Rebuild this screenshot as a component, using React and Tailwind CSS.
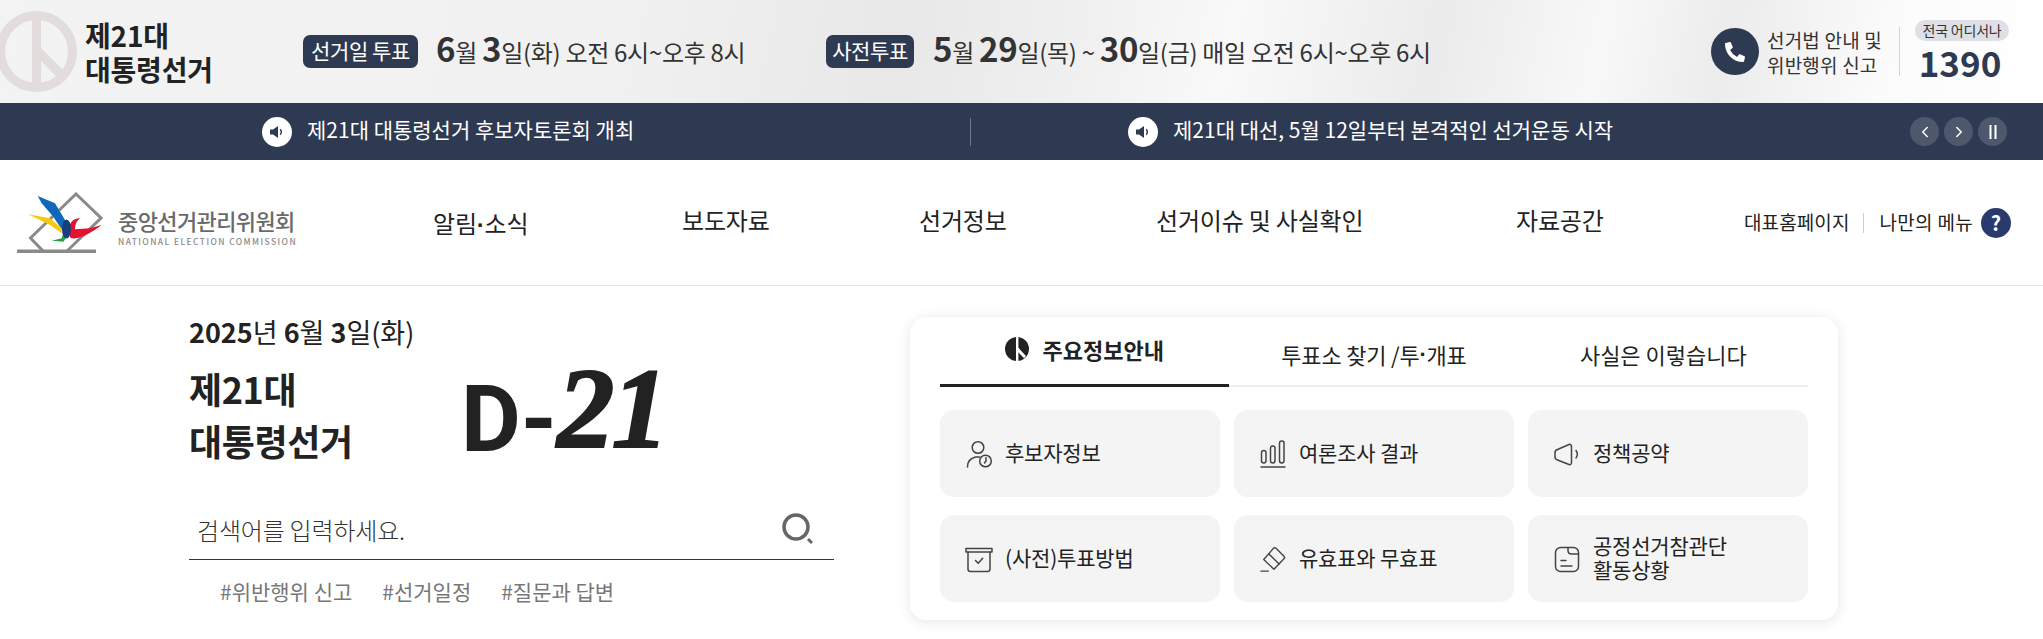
import React from "react";
import { ChevronLeft, ChevronRight } from "lucide-react";
import { FaPhoneAlt } from "react-icons/fa";

const Speaker = () => (
  <span className="flex h-[30px] w-[30px] shrink-0 items-center justify-center rounded-full bg-white">
    <svg viewBox="0 0 20 20" className="h-[20px] w-[20px]">
      <path d="M3 7.500h3L11 4v12l-5-3.500H3z" fill="#2e3a52" />
      <path d="M13.200 7.200c1.300 1.600 1.300 4 0 5.600" stroke="#2e3a52" strokeWidth="1.400" fill="none" />
    </svg>
  </span>
);

const Ctrl = ({ children }) => (
  <button className="flex h-[29px] w-[29px] items-center justify-center rounded-full bg-[#4e586c] text-white">{children}</button>
);

const Mark = ({ className, color }) => (
  <svg viewBox="0 0 80 80" className={className}>
    <circle cx="40" cy="40" r="35.500" fill="none" stroke={color} strokeWidth="9" />
    <path d="M35.500 4h9v72h-9z" fill={color} />
    <path d="M42 34 L70 62 L64 69 L42 47z" fill={color} />
  </svg>
);

const TabMark = () => (
  <svg viewBox="0 0 24 24" className="h-[24px] w-[24px]">
    <circle cx="12" cy="12" r="12" fill="#222" />
    <path d="M11 0h2.400v24H11z" fill="#fff" />
    <path d="M13 10.500 L21 19 L19 21.200 L13 15z" fill="#fff" />
  </svg>
);

const stroke = { fill: "none", stroke: "#444", strokeWidth: 1.5, strokeLinecap: "round", strokeLinejoin: "round" };

const icons = {
  person: (
    <svg viewBox="0 0 28 28" className="h-[28px] w-[28px]" {...stroke}>
      <circle cx="13" cy="7.500" r="5.800" />
      <path d="M2.500 27c0-5.500 3.500-9 8-10h4" />
      <circle cx="20.500" cy="21" r="5.800" />
      <path d="M21 17.500v3.500l-1.500 2" />
    </svg>
  ),
  bars: (
    <svg viewBox="0 0 26 28" className="h-[28px] w-[26px]" {...stroke}>
      <rect x="1.500" y="10.500" width="4.500" height="12.500" rx="2.200" />
      <rect x="10.500" y="6" width="4.500" height="17" rx="2.200" />
      <rect x="19.500" y="1" width="4.500" height="22" rx="2.200" />
      <path d="M1 27h24" />
    </svg>
  ),
  horn: (
    <svg viewBox="0 0 26 28" className="h-[28px] w-[26px]" {...stroke}>
      <path d="M3.500 9.500 15 4.500c1.500-.5 2.500.5 2.500 2v16c0 1.500-1 2.500-2.500 2L3.500 20c-1.500-.5-2.500-1.500-2.500-3v-4.500c0-1.500 1-2.500 2.500-3z" />
      <path d="M22 10.500c1.600 2.200 1.600 5.300 0 7.500" />
    </svg>
  ),
  box: (
    <svg viewBox="0 0 28 28" className="h-[28px] w-[28px]" {...stroke}>
      <path d="M1 3.500h26v3.500H1z" />
      <path d="M3 7v17c0 1.500 1 2.500 2.500 2.500h17c1.500 0 2.500-1 2.500-2.500V7" />
      <path d="M10.500 15.500l2.700 2.700 4.500-5" />
    </svg>
  ),
  eraser: (
    <svg viewBox="0 0 28 28" className="h-[28px] w-[26px]" {...stroke}>
      <path d="M4 14.500 14.500 2.500c.8-.9 2-.9 2.800 0l8.500 8.500c.8.8.8 2 0 2.800L15 25z" />
      <path d="M9.500 8.500l11 11" />
      <path d="M1 27h8" />
    </svg>
  ),
  note: (
    <svg viewBox="0 0 26 28" className="h-[28px] w-[26px]" {...stroke}>
      <rect x="1.500" y="2.500" width="23" height="24" rx="5" />
      <path d="M14 2.500v3c0 2 1.500 3.500 3.500 3.500h7" />
      <path d="M7 15.500h5M7 21h11" />
    </svg>
  ),
};

const Dot = () => <span className="font-['Liberation_Sans',sans-serif] font-bold">·</span>;

const Tile = ({ icon, children }) => (
  <a className="flex h-[87px] items-center rounded-[14px] bg-[#f4f4f4] pl-[25px]">
    <span className="flex w-[28px] shrink-0 justify-center">{icons[icon]}</span>
    <span className="ml-[12px] pb-[3px] text-[21px] leading-[24px] tracking-[-0.2px] text-[#222]">{children}</span>
  </a>
);

export default function App() {
  return (
    <div className="h-[639px] w-[2043px] overflow-hidden bg-white font-['Noto_Sans_CJK_KR','Noto_Sans',sans-serif] text-[#222]">
      {/* election strip */}
      <div className="flex h-[103px] items-center bg-[linear-gradient(102deg,#f3f3f3_0%,#f1f1f1_30%,#e8e8e8_44%,#efefef_52%,#f9f9f9_60%,#ebebeb_70%,#f8f8f8_78%,#ececec_84%,#fbfbfb_92%,#ffffff_100%)]">
        <Mark className="-ml-[4px] h-[81px] w-[81px] shrink-0" color="#e3dcdc" />
        <div className="ml-[8px] w-[218px] text-[28px] font-bold leading-[34px] tracking-[-0.2px] text-[#222]">
          제21대<br />대통령선거
        </div>
        <span className="flex h-[33px] w-[115px] items-center justify-center rounded-[7px] bg-[#2e3a52] pb-[2px] text-[21px] tracking-[-0.4px] text-white">선거일 투표</span>
        <div className="ml-[18px] w-[390px] pb-[6px] text-[24px] leading-none tracking-[-0.3px] text-[#333]">
          <b className="text-[33px] font-bold">6</b>월 <b className="text-[33px] font-bold">3</b>일(화) 오전 6시~오후 8시
        </div>
        <span className="flex h-[33px] w-[88px] items-center justify-center rounded-[7px] bg-[#2e3a52] pb-[2px] text-[21px] tracking-[-0.4px] text-white">사전투표</span>
        <div className="ml-[19px] w-[778px] pb-[6px] text-[24px] leading-none tracking-[-0.3px] text-[#333]">
          <b className="text-[33px] font-bold">5</b>월 <b className="text-[33px] font-bold">29</b>일(목) ~ <b className="text-[33px] font-bold">30</b>일(금) 매일 오전 6시~오후 6시
        </div>
        <span className="flex h-[47px] w-[48px] shrink-0 items-center justify-center rounded-full bg-[#2e3a52] text-white">
          <FaPhoneAlt className="h-[20px] w-[20px]" />
        </span>
        <div className="ml-[8px] w-[132px] text-[19px] leading-[25px] tracking-[0.2px] text-[#333]">
          선거법 안내 및<br />위반행위 신고
        </div>
        <div className="flex h-[49px] w-[16px] border-l border-[#d5d5d5]" />
        <div className="flex w-[94px] flex-col items-center">
          <span className="flex h-[21px] w-[94px] items-center justify-center rounded-full bg-[#dfe0e5] text-[14px] tracking-[-0.2px] text-[#333]">전국 어디서나</span>
          <span className="-ml-[4px] text-[35px] font-bold leading-[42px] text-[#2e3a52]">1390</span>
        </div>
      </div>

      {/* notices */}
      <div className="flex h-[57px] items-center bg-[#2e3a52] pl-[262px] text-[21px] text-white">
        <Speaker />
        <span className="ml-[15px] w-[663px] pb-[4px]">제21대 대통령선거 후보자토론회 개최</span>
        <span className="h-[28px] border-l border-[#6d7688]" />
        <span className="w-[157px]" />
        <Speaker />
        <span className="ml-[15px] w-[737px] pb-[4px]">제21대 대선, 5월 12일부터 본격적인 선거운동 시작</span>
        <div className="flex items-center gap-[5px]">
          <Ctrl><ChevronLeft size={18} /></Ctrl>
          <Ctrl><ChevronRight size={18} /></Ctrl>
          <Ctrl>
            <svg viewBox="0 0 14 14" className="h-[14px] w-[14px]">
              <path d="M3.500 0h2v14h-2zM8.500 0h2v14h-2z" fill="#fff" />
            </svg>
          </Ctrl>
        </div>
      </div>

      {/* nav */}
      <div className="flex h-[126px] items-center border-b border-[#e2e2e2] pl-[17px]">
        <svg viewBox="0 0 86 62" className="h-[62px] w-[86px] shrink-0">
          <path d="M26 59 13.500 46 59 2 84 26 50 59" fill="none" stroke="#8a8a8a" strokeWidth="3" />
          <rect x="0" y="57.500" width="79" height="3.500" fill="#8a8a8a" />
          <path d="M20.700 4 38 11.300 48 28 51.300 39.700H46.300L36.300 24.700 24.700 11.300z" fill="#1268b8" />
          <path d="M11.300 22.300 33 26.300 44.700 36.300V41.300L33 33z" fill="#f5c90f" />
          <path d="M34.700 48.700 44.700 46.300 48 34.700 52 42 46.300 49.700z" fill="#2f9e44" />
          <path d="M84.700 33 73 36.300 58 37.300C58 32 60 28.500 63 26.300 57 26 53 30 52 36 51.500 42 53 46 54.700 46.300 62 47 71.300 43 84.700 33z" fill="#e5122d" />
          <ellipse cx="49.500" cy="37" rx="4.500" ry="9.500" fill="#163f7d" />
        </svg>
        <div className="ml-[15px] w-[177px] shrink-0 pt-[10px]">
          <div className="text-[22px] font-medium leading-[24px] tracking-[-0.6px] whitespace-nowrap text-[#6a6a6a]">중앙선거관리위원회</div>
          <div className="mt-[4px] text-[8.500px] font-medium leading-[11px] tracking-[1.4px] whitespace-nowrap text-[#8a8a8a]">NATIONAL ELECTION COMMISSION</div>
        </div>
        <nav className="flex -translate-y-[3px] items-center text-[24px] tracking-[-0.2px] text-[#222]">
          <a className="ml-[138px] mt-[9px] w-[249px]">알림<Dot />소식</a>
          <a className="w-[237px]">보도자료</a>
          <a className="w-[237px]">선거정보</a>
          <a className="w-[360px]">선거이슈 및 사실확인</a>
          <a className="w-[228px]">자료공간</a>
        </nav>
        <a className="text-[19px] tracking-[0.1px]">대표홈페이지</a>
        <span className="ml-[14px] h-[20px] border-l border-[#cfcfcf]" />
        <a className="ml-[15px] text-[19px] tracking-[0.3px]">나만의 메뉴</a>
        <span className="ml-[8px] flex h-[30px] w-[30px] items-center justify-center rounded-full bg-[#2b3a6e] text-[20px] font-bold text-white">?</span>
      </div>

      {/* main */}
      <div className="flex pl-[189px] pt-[31px]">
        <div className="w-[645px]">
          <div className="text-[27px] leading-[30px] text-[#222]">
            <b className="font-bold">2025</b>년 <b className="font-bold">6</b>월 <b className="font-bold">3</b>일(화)
          </div>
          <div className="mt-[15px] flex">
            <div className="w-[272px] text-[36px] font-bold leading-[52px] tracking-[-0.4px]">제21대<br />대통령선거</div>
            <div className="flex h-[104px] items-end leading-none text-[#222]">
              <span className="font-['Roboto',sans-serif] text-[92px] font-bold">D-</span>
              <span className="font-['Liberation_Serif',serif] text-[115px] font-bold italic tracking-[-3px] [-webkit-text-stroke:2px_#222]">21</span>
            </div>
          </div>
          <div className="mt-[33px] flex h-[61px] items-center justify-between border-b border-[#333] pl-[8px] pr-[20px]">
            <span className="pt-[1px] text-[24px] font-light tracking-[-0.2px] text-[#333]">검색어를 입력하세요.</span>
            <svg viewBox="0 0 32 32" className="h-[32px] w-[32px]">
              <circle cx="14" cy="14" r="12" fill="none" stroke="#666" strokeWidth="3.500" />
              <path d="M26 26l4 4" stroke="#666" strokeWidth="3" />
            </svg>
          </div>
          <div className="mt-[17px] flex gap-[30px] pl-[31px] text-[21px] leading-[28px] text-[#777]">
            <span>#위반행위 신고</span>
            <span>#선거일정</span>
            <span>#질문과 답변</span>
          </div>
        </div>

        <div className="ml-[76px] h-[303px] w-[928px] rounded-[16px] bg-white px-[30px] shadow-[0_2px_14px_rgba(0,0,0,0.1)]">
          <div className="grid h-[70px] grid-cols-3 border-b-2 border-[#eeeeee] text-[22px]">
            <div className="-mb-[2px] flex items-center justify-center gap-[13px] border-b-[3px] border-[#222] pb-[3px] font-semibold">
              <TabMark /><span>주요정보안내</span>
            </div>
            <div className="flex items-center justify-center pt-[6px] tracking-[-0.2px]">투표소 찾기 /투<Dot />개표</div>
            <div className="flex items-center justify-center pt-[6px]">사실은 이렇습니다</div>
          </div>
          <div className="mt-[23px] grid grid-cols-3 gap-x-[14px] gap-y-[18px]">
            <Tile icon="person">후보자정보</Tile>
            <Tile icon="bars">여론조사 결과</Tile>
            <Tile icon="horn">정책공약</Tile>
            <Tile icon="box">(사전)투표방법</Tile>
            <Tile icon="eraser">유효표와 무효표</Tile>
            <Tile icon="note">공정선거참관단<br />활동상황</Tile>
          </div>
        </div>
      </div>
    </div>
  );
}
